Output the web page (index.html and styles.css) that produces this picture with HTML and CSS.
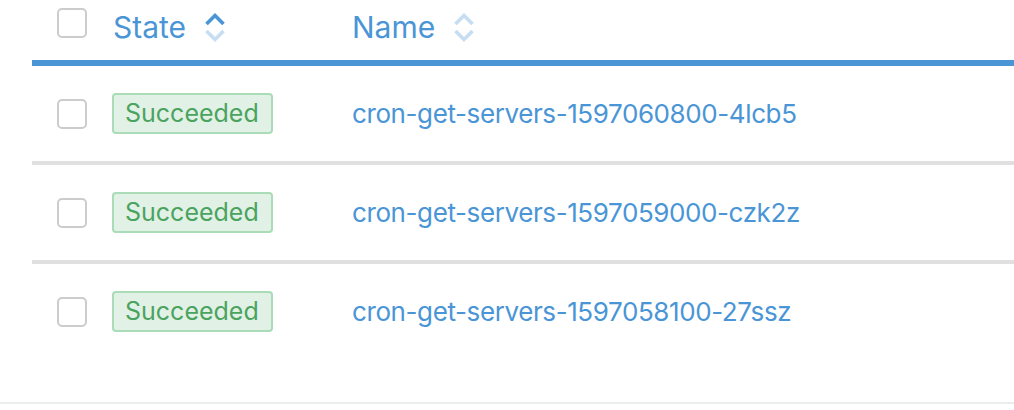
FILE: index.html
```html
<!DOCTYPE html>
<html>
<head>
<meta charset="utf-8">
<link rel="stylesheet" href="styles.css">
</head>
<body>
<div class="page">
  <div class="table">
    <div class="row head">
      <div class="cell check"><span class="box"></span></div>
      <div class="cell th">State
        <svg class="sort" viewBox="0 0 20 31" width="20" height="31"><path class="up active" d="M1.5 12 L10 3.5 L18.5 12"/><path class="down" d="M1.5 19 L10 27.5 L18.5 19"/></svg>
      </div>
      <div class="cell th">Name
        <svg class="sort" viewBox="0 0 20 31" width="20" height="31"><path class="up" d="M1.5 12 L10 3.5 L18.5 12"/><path class="down" d="M1.5 19 L10 27.5 L18.5 19"/></svg>
      </div>
    </div>
    <div class="row">
      <div class="cell check"><span class="box"></span></div>
      <div class="cell"><span class="badge">Succeeded</span></div>
      <div class="cell"><a class="link">cron-get-servers-1597060800-4lcb5</a></div>
    </div>
    <div class="row">
      <div class="cell check"><span class="box"></span></div>
      <div class="cell"><span class="badge">Succeeded</span></div>
      <div class="cell"><a class="link">cron-get-servers-1597059000-czk2z</a></div>
    </div>
    <div class="row last">
      <div class="cell check"><span class="box"></span></div>
      <div class="cell"><span class="badge">Succeeded</span></div>
      <div class="cell"><a class="link">cron-get-servers-1597058100-27ssz</a></div>
    </div>
  </div>
  <div class="footer"></div>
</div>
</body>
</html>
```
FILE: styles.css
```css
html, body {
  margin: 0;
  padding: 0;
  background: #fff;
}
body {
  font-family: Inter, "Noto Sans", sans-serif;
  width: 1014px;
  height: 410px;
  overflow: hidden;
}
.page {
  display: flex;
  flex-direction: column;
}
.table {
  margin-left: 32px;
  display: flex;
  flex-direction: column;
  height: 402px;
}
.row {
  display: grid;
  grid-template-columns: 81px 239px 1fr;
  align-items: center;
  height: 95px;
  border-bottom: 4px solid #e0e0e0;
}
.row.head {
  height: 60px;
  border-bottom: 6px solid #4a95d6;
  align-items: start;
}
.row.last {
  border-bottom: none;
}
.cell {
  display: flex;
  align-items: center;
}
.check {
  padding-left: 25px;
}
.head .check {
  padding-top: 8px;
}
.box {
  display: block;
  width: 26px;
  height: 26px;
  border: 2px solid #cccccc;
  border-radius: 5px;
  background: #fff;
}
.th {
  color: #4a95d6;
  font-size: 30px;
  padding-top: 9px;
  line-height: 36px;
  align-items: flex-start;
}
.sort {
  margin-left: 19px;
  margin-top: 3px;
  flex: none;
}
.sort path {
  fill: none;
  stroke: #c6ddf2;
  stroke-width: 3.6;
}
.sort path.active {
  stroke: #4a95d6;
}
.badge {
  display: inline-block;
  box-sizing: border-box;
  height: 41px;
  line-height: 37px;
  padding: 0 12px 0 11px;
  margin-left: -1px;
  background: #e2f1e6;
  border: 2px solid #aadcb8;
  border-radius: 4px;
  color: #4ba360;
  font-size: 25px;
  letter-spacing: 0;
}
.link {
  color: #4a95d6;
  font-size: 26px;
  letter-spacing: -0.4px;
  text-decoration: none;
}
.footer {
  height: 2px;
  background: #e9eded;
}
```
